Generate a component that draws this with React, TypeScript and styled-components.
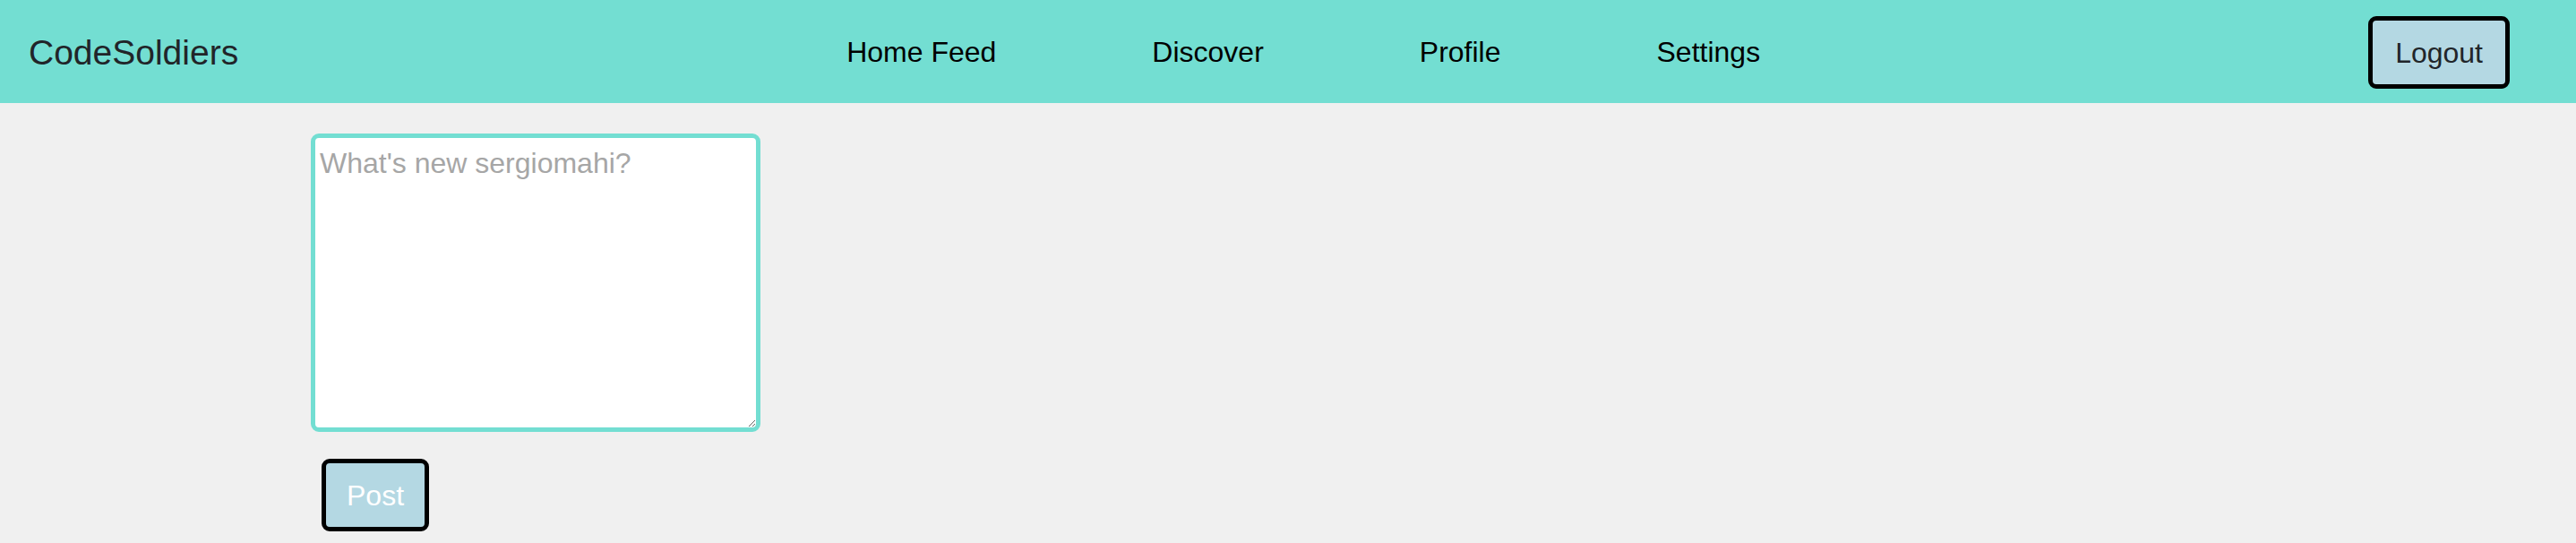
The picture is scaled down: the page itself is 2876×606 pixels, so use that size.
import * as React from "react"
import styled, { createGlobalStyle } from "styled-components"

const GlobalStyle = createGlobalStyle`
  html, body {
    margin: 0;
    padding: 0;
    background: #f0f0f0;
    font-family: "Liberation Sans", Arial, sans-serif;
  }
`

const Navbar = styled.header`
  display: flex;
  align-items: center;
  justify-content: space-between;
  height: 115px;
  padding: 2px 74px 0 32px;
  background: #73ded2;
  box-sizing: border-box;
`

const Brand = styled.a`
  font-size: 39px;
  color: #212529;
  text-decoration: none;
`

const NavLinks = styled.nav`
  display: flex;
  align-items: center;
  gap: 174px;
`

const NavLink = styled.a`
  font-size: 32px;
  color: #000;
  text-decoration: none;
`

const Button = styled.button<{ $light?: boolean }>`
  font-family: inherit;
  font-size: 32px;
  line-height: 37px;
  padding: 18px 25px 16px;
  background: #b4d8e3;
  color: ${(p) => (p.$light ? "#fff" : "#212529")};
  border: 5px solid #000;
  border-radius: 9px;
  cursor: pointer;
`

const Main = styled.main`
  padding: 34px 0 0 347px;
`

const PostForm = styled.form`
  display: flex;
  flex-direction: column;
  align-items: flex-start;
  gap: 30px;
`

const PostInput = styled.textarea`
  box-sizing: border-box;
  width: 502px;
  height: 333px;
  padding: 10px 5px;
  font-family: inherit;
  font-size: 32px;
  border: 5px solid #73ded2;
  border-radius: 9px;
  background: #fff;
  outline: none;

  &::placeholder {
    color: #a6a6a6;
  }
`

const PostButton = styled(Button)`
  margin-left: 12px;
  padding: 18px 23px 16px;
`

const App = () => {
  return (
    <>
      <GlobalStyle />
      <Navbar>
        <Brand href="#">CodeSoldiers</Brand>
        <NavLinks>
          <NavLink href="#">Home Feed</NavLink>
          <NavLink href="#">Discover</NavLink>
          <NavLink href="#">Profile</NavLink>
          <NavLink href="#">Settings</NavLink>
        </NavLinks>
        <Button>Logout</Button>
      </Navbar>
      <Main>
        <PostForm onSubmit={(e) => e.preventDefault()}>
          <PostInput placeholder="What's new sergiomahi?" />
          <PostButton $light type="submit">
            Post
          </PostButton>
        </PostForm>
      </Main>
    </>
  )
}

export default App
